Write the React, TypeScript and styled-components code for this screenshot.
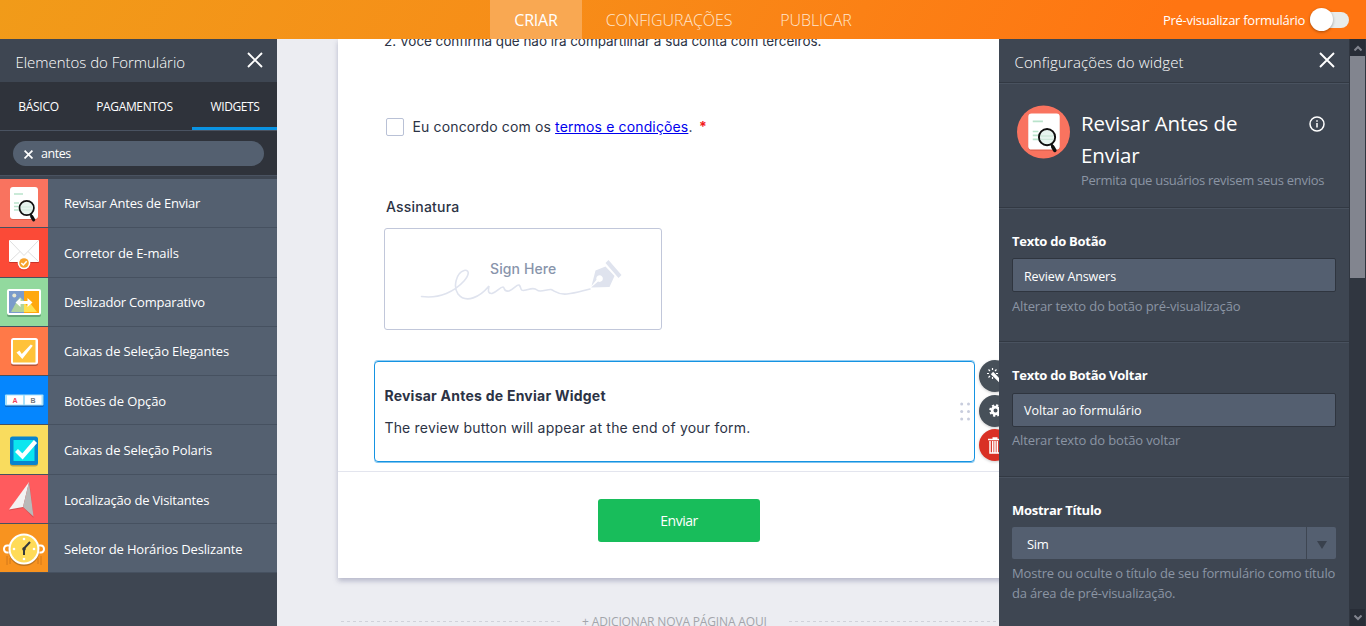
import React from "react";
import styled, { createGlobalStyle } from "styled-components";

const GlobalStyle = createGlobalStyle`
  * { box-sizing: border-box; }
  body { margin: 0; background: #ecedf2; overflow: hidden; }
  button, input { font: inherit; }
`;

const ui = `"Open Sans", "Noto Sans", sans-serif`;
const inter = `Inter, "Liberation Sans", sans-serif`;

const Page = styled.div`
  display: flex;
  flex-direction: column;
  width: 1366px;
  height: 626px;
  overflow: hidden;
  font-family: ${ui};
  font-size: 13px;
  color: #fff;
`;

const TopBar = styled.header`
  flex: none;
  display: flex;
  height: 39px;
  padding-left: 490px;
  background: linear-gradient(120deg, #f19b19 0%, #f78d18 40%, #ff7512 85%, #ff7512 100%);
`;

const TopTab = styled.a<{ $active?: boolean; $width: number; $spacing: number }>`
  display: flex;
  align-items: center;
  justify-content: center;
  width: ${(p) => p.$width}px;
  padding-top: 1px;
  font-size: 16px;
  font-weight: ${(p) => (p.$active ? 400 : 300)};
  letter-spacing: ${(p) => p.$spacing}px;
  white-space: nowrap;
  color: ${(p) => (p.$active ? "#fff" : "#ffe6cf")};
  background: ${(p) => (p.$active ? "#f9a852" : "transparent")};
`;

const Preview = styled.div`
  display: flex;
  align-items: center;
  gap: 5px;
  margin-left: auto;
  padding-right: 17px;
  font-size: 13px;
  letter-spacing: -0.27px;
`;

const Toggle = styled.span`
  display: flex;
  align-items: center;
  width: 39px;
  height: 16px;
  border-radius: 8px;
  background: #e8eceb;
`;

const Knob = styled.span`
  width: 23px;
  height: 23px;
  flex: none;
  border-radius: 50%;
  background: #fff;
  box-shadow: 0 1px 3px rgba(0, 0, 0, 0.35);
`;

const Body = styled.div`
  flex: 1;
  min-height: 0;
  display: flex;
`;

const LeftPanel = styled.aside`
  flex: none;
  width: 277px;
  background: #3e4652;
`;

const PanelTitle = styled.div`
  display: flex;
  justify-content: space-between;
  align-items: center;
  height: 43px;
  padding: 0 14px 0 15.5px;
  font-size: 15px;
  font-weight: 300;

  svg { margin-top: -1px; }
`;

const TitleText = styled.span<{ $spacing: number }>`
  padding-top: 2px;
  letter-spacing: ${(p) => p.$spacing}px;
  white-space: nowrap;
`;

const Tabs = styled.nav`
  display: flex;
  width: 278px;
  height: 48px;
  background: linear-gradient(90deg, #2f333b 277px, transparent 277px);
`;

const Tab = styled.a<{ $active?: boolean; $width: number; $spacing: number }>`
  display: flex;
  align-items: center;
  justify-content: center;
  width: ${(p) => p.$width}px;
  padding-top: 4px;
  font-size: 12px;
  letter-spacing: ${(p) => p.$spacing}px;
  border-bottom: 3px solid ${(p) => (p.$active ? "#0a93e2" : "transparent")};
`;

const SearchArea = styled.div`
  height: 49px;
  padding: 10px 13px 0;
  background: #2f333b;
  border-top: 1px solid #4a5361;
  border-bottom: 3px solid #3e4652;
  box-shadow: inset 0 -1px 0 #4a5361;
`;

const SearchField = styled.div`
  display: flex;
  align-items: center;
  gap: 8px;
  height: 25px;
  padding-left: 11px;
  border-radius: 13px;
  background: #546070;
  font-size: 12.5px;
  letter-spacing: -0.45px;

  svg { margin-top: 2px; }
`;

const WidgetList = styled.ul`
  margin: 0;
  padding: 0;
  list-style: none;
`;

const WidgetRow = styled.li`
  display: flex;
  height: 49.3px;
  background: #546070;
  border-bottom: 1px solid #465160;
`;

const IconTile = styled.span<{ $color: string }>`
  display: flex;
  align-items: center;
  justify-content: center;
  width: 48px;
  background: ${(p) => p.$color};
`;

const WidgetName = styled.span<{ $spacing: number; $nudge: number }>`
  align-self: center;
  padding: ${(p) => p.$nudge}px 0 0 16px;
  font-size: 13px;
  letter-spacing: ${(p) => p.$spacing}px;
  white-space: nowrap;
`;

const Canvas = styled.main`
  flex: none;
  width: 722px;
  overflow: hidden;
  padding-left: 61px;
  background: #ecedf2;
  font-family: ${inter};
  color: #2c3345;
`;

const FormCard = styled.section`
  width: 752px;
  height: 539px;
  background: #fff;
  box-shadow: 0 3px 5px rgba(85, 90, 130, 0.35);
`;

const FormBody = styled.div`
  height: 433px;
  padding: 0 0 0 36px;
  border-bottom: 1px solid #e3e5ee;
`;

const TermLine = styled.p`
  margin: 0 0 0 10px;
  height: 78px;
  line-height: 20px;
  font-size: 13.5px;
  letter-spacing: -0.05px;
  overflow: hidden;

  span { display: block; margin-top: -8px; }
`;

const ConsentRow = styled.label`
  display: flex;
  align-items: center;
  height: 20px;
  margin-left: 12px;
  font-size: 14px;
  letter-spacing: 0.14px;
`;

const ConsentText = styled.span`
  padding-bottom: 2px;
  white-space: pre;
`;

const CheckBox = styled.span`
  width: 18px;
  height: 18px;
  margin-right: 8.5px;
  border: 1px solid #b9c1d6;
  border-radius: 2px;
`;

const TermsLink = styled.a`
  color: #0000ee;
  text-decoration: underline;
`;

const Required = styled.b`
  margin-left: 6.5px;
  color: #f2191c;
`;

const FieldLabel = styled.h3`
  margin: 60px 0 0 12px;
  height: 51px;
  line-height: 20px;
  font-size: 14px;
  font-weight: 500;
  letter-spacing: 0.2px;
`;

const SignatureBox = styled.div`
  position: relative;
  width: 278px;
  height: 102px;
  margin: -20px 0 0 10px;
  border: 1px solid #c1c7da;
  border-radius: 3px;

  svg { display: block; }
`;

const SignHint = styled.span`
  position: absolute;
  left: 105px;
  top: 30px;
  font-size: 14px;
  font-weight: 500;
  line-height: 20px;
  letter-spacing: 0.1px;
  color: #8894ab;
  white-space: nowrap;
`;

const Selected = styled.div`
  position: relative;
  display: flex;
  align-items: center;
  justify-content: space-between;
  width: 601px;
  height: 101px;
  margin-top: 31px;
  padding: 0 4.5px 0 9.4px;
  border: 1px solid #1593e2;
  border-radius: 4px;
  box-shadow: 0 1px 0 rgba(21, 147, 226, 0.55), 0 -1px 0 rgba(21, 147, 226, 0.45);
`;

const SelectedText = styled.div`
  h3 {
    margin: 0 0 12px;
    font-size: 14px;
    line-height: 20px;
    font-weight: 700;
    letter-spacing: 0.24px;
  }
  p {
    margin: 0;
    font-size: 14px;
    line-height: 20px;
    letter-spacing: 0.2px;
  }
`;

const Actions = styled.div`
  position: absolute;
  left: 604px;
  top: -2px;
  display: flex;
  flex-direction: column;
  gap: 2.5px;
`;

const RoundButton = styled.button<{ $color: string }>`
  display: flex;
  align-items: center;
  justify-content: center;
  width: 32px;
  height: 32px;
  padding: 0;
  border: 0;
  border-radius: 50%;
  background: ${(p) => p.$color};
  box-shadow: 0 1px 3px rgba(0, 0, 0, 0.2);
`;

const Submit = styled.button`
  display: block;
  width: 162px;
  height: 43px;
  margin: 27px 0 0 260px;
  border: 0;
  border-radius: 3px;
  background: #18bd5b;
  color: #fff;
  font-family: ${ui};
  font-size: 14px;
  letter-spacing: -0.5px;
`;

const AddPage = styled.div`
  display: flex;
  align-items: center;
  gap: 22.5px;
  width: 676px;
  height: 20px;
  margin: 33px 0 0 2.6px;
  font-family: ${ui};
  font-size: 12px;
  color: #a3a5ab;
`;

const AddPageText = styled.span`
  letter-spacing: -0.15px;
  white-space: nowrap;
`;

const Dash = styled.i`
  flex: none;
  width: 219px;
  height: 1px;
  background: repeating-linear-gradient(90deg, #d0d2da 0 3px, transparent 3px 6px);
`;

const RightPanel = styled.aside`
  flex: none;
  width: 350px;
  background: #3e4652;
`;

const Section = styled.section<{ $height: number; $top?: number }>`
  height: ${(p) => p.$height}px;
  padding: ${(p) => p.$top ?? 23}px 13px 0;
  border-top: 1px solid #323943;
  box-shadow: inset 0 1px 0 #49525f;
`;

const WidgetHeader = styled.div`
  display: flex;
  padding: 0 11px 0 5px;
`;

const HeaderIcon = styled.svg`
  flex: none;
`;

const InfoIcon = styled.svg`
  flex: none;
  margin-top: 11px;
`;

const HeadText = styled.div`
  flex: 1;
  min-width: 0;
  margin-left: 11px;
`;

const Heading = styled.h2`
  width: 190px;
  margin: 2px 0 -1.5px;
  font-size: 20.5px;
  font-weight: 400;
  line-height: 32px;
  letter-spacing: -0.1px;
`;

const Hint = styled.p<{ $spacing: number }>`
  margin: 0;
  font-size: 13px;
  line-height: 20px;
  letter-spacing: ${(p) => p.$spacing}px;
  color: #8b95a4;
  white-space: nowrap;
`;

const Label = styled.label`
  display: block;
  height: 27px;
  line-height: 20px;
  font-weight: 700;
  font-size: 13px;
  letter-spacing: -0.27px;
`;

const Input = styled.div<{ $spacing: number; $drop?: number }>`
  display: flex;
  align-items: center;
  width: 324px;
  height: 34px;
  margin: ${(p) => p.$drop ?? 0}px 0 ${(p) => 4 - (p.$drop ?? 0)}px;
  padding: ${(p) => 2 - 2 * (p.$drop ?? 0)}px 0 0 11px;
  border: 1px solid #2f353f;
  border-radius: 2px;
  background: #545f70;
  font-size: 12.5px;
  letter-spacing: ${(p) => p.$spacing}px;
`;

const Select = styled.div`
  display: flex;
  width: 324px;
  height: 32px;
  margin-bottom: 4px;
  border-radius: 2px;
  background: #545f70;
`;

const SelectValue = styled.span`
  flex: 1;
  padding: 1px 0 0 15px;
  line-height: 33px;
  letter-spacing: -0.3px;
`;

const SelectArrow = styled.span`
  display: flex;
  align-items: center;
  justify-content: center;
  width: 30px;
  padding-top: 3px;
  border-left: 1px solid #3e4652;
`;

const ScrollTrack = styled.div`
  flex: none;
  display: flex;
  flex-direction: column;
  width: 17px;
  padding: 0 1px;
  background: #303640;
`;

const ScrollArrow = styled.span`
  display: flex;
  align-items: center;
  justify-content: center;
  height: 17px;
  background: #282d37;
`;

const ScrollThumb = styled.span`
  height: 222px;
  margin-bottom: auto;
  background: #82858f;
`;

const Close = ({ size = 16, weight = 1.9 }: { size?: number; weight?: number }) => (
  <svg width={size} height={size} viewBox="0 0 16 16" stroke="#fff" strokeWidth={weight}>
    <path d="M1 1l14 14M15 1L1 15" />
  </svg>
);

const ReviewIcon = ({ size = 48 }: { size?: number }) => (
  <svg width={size} height={size} viewBox="0 0 48 48" fill="none">
    <rect x="10" y="9" width="28" height="32" rx="3" fill="#c9503f" opacity=".6" />
    <rect x="10" y="8" width="28" height="32" rx="3" fill="#fff" />
    <path d="M14 15h9M14 24h5M14 27.5h5M14 31h6" stroke="#b9e3cb" strokeWidth="1.5" />
    <circle cx="26.7" cy="29" r="7.2" fill="#e7f4ef" stroke="#111" strokeWidth="1.7" />
    <path d="M21 28h11M21 31h11" stroke="#cfe9dc" strokeWidth="1.2" />
    <path d="M30.5 35l1.2 2.3" stroke="#111" strokeWidth="2" />
    <path d="M31.8 37.6l1.8 3.2" stroke="#111" strokeWidth="3.2" strokeLinecap="round" />
  </svg>
);

const MailIcon = () => (
  <svg width="48" height="48" viewBox="0 0 48 48" fill="none">
    <rect x="9" y="13" width="30" height="22" rx="1" fill="#c93329" />
    <rect x="9" y="12" width="30" height="22" rx="1" fill="#fff" />
    <path d="M9.5 33.5L20 23.5M38.5 33.5L28 23.5M9.5 12.5L24 27.5L38.5 12.5" stroke="#dedede" strokeWidth="1" />
    <circle cx="24" cy="36" r="6.4" fill="#c93329" opacity=".5" />
    <circle cx="24" cy="35" r="6.3" fill="#fff" />
    <circle cx="24" cy="35" r="4.8" fill="#f7a32c" />
    <path d="M21.3 35l2 2 3.4-3.8" stroke="#fff" strokeWidth="1.5" />
  </svg>
);

const CompareIcon = () => (
  <svg width="48" height="48" viewBox="0 0 48 48" fill="none">
    <rect x="7" y="13" width="34" height="26" rx="2" fill="#66a678" />
    <rect x="7" y="11" width="34" height="26" rx="2" fill="#fff" />
    <path d="M9 13h15v22H9z" fill="#7b9bcb" />
    <path d="M24 13h15v22H24z" fill="#ffa80f" />
    <circle cx="14.3" cy="17.5" r="2" fill="#e8e8d0" />
    <path d="M11 34l6-11 3-4 4 4v11z" fill="#aed3a0" />
    <path d="M24 34V24l3 4 3-3 7 9z" fill="#ffe14f" />
    <path d="M15.5 24.5l5-4.5v3h7v-3l5 4.5-5 4.500v-3h-7v3z" fill="#fff" />
  </svg>
);

const ElegantIcon = () => (
  <svg width="48" height="48" viewBox="0 0 48 48" fill="none">
    <rect x="11" y="12" width="27" height="27" rx="2.5" fill="#b85334" />
    <rect x="11" y="11" width="27" height="26.5" rx="2.5" fill="#fff" />
    <rect x="13" y="13" width="22.5" height="22.5" fill="#ffc23a" />
    <path d="M16.5 25.5l3-2 2.3 3.5 9-9.5 2 1.2-10.5 13.3z" fill="#fff" />
  </svg>
);

const Letter = styled.text`
  font-family: "Liberation Sans", sans-serif;
  font-size: 7px;
  font-weight: 700;
`;

const OptionIcon = () => (
  <svg width="48" height="48" viewBox="0 0 48 48" fill="none">
    <rect x="5" y="20" width="38.5" height="11" rx="1" fill="#0b62bd" />
    <rect x="5" y="18.5" width="38.5" height="11" rx="1" fill="#a8e2fb" />
    <path d="M7 19.5h16v9H7zM25 19.5h16.5v9H25z" fill="#fff" />
    <Letter x="12.5" y="26.6" fill="#f2415a">A</Letter>
    <Letter x="30.5" y="26.6" fill="#737780">B</Letter>
  </svg>
);

const PolarisIcon = () => (
  <svg width="48" height="48" viewBox="0 0 48 48" fill="none">
    <rect x="10" y="12.5" width="28" height="28" rx="3" fill="#bba34a" />
    <rect x="10" y="10.5" width="28" height="28.5" rx="2.5" fill="#0784cf" />
    <rect x="13.5" y="14" width="21" height="21" fill="#0be6ef" />
    <path d="M16.5 24.5l6 6L35.5 15.5" stroke="#fff" strokeWidth="4.2" />
  </svg>
);

const VisitorIcon = () => (
  <svg width="48" height="48" viewBox="0 0 48 48" fill="none">
    <path d="M29.5 8L9 35.5l14.5-2.5L33.5 43z" fill="#b44548" opacity=".5" />
    <path d="M29 7L9 34.5l14-2.5z" fill="#f3f3f3" />
    <path d="M29 7l-6 25 10.5 9.5z" fill="#b9b9b9" />
  </svg>
);

const ClockIcon = () => (
  <svg width="48" height="48" viewBox="0 0 48 48" fill="none">
    <path d="M7 32v9M10 34v6M38 34v6M41 32v9" stroke="#c9721b" strokeWidth=".8" />
    <path d="M10 21.5H7a3 3.500 0 000 7h3M38 21.5h3a3 3.500 0 010 7h-3" stroke="#fff" strokeWidth="2" />
    <circle cx="24" cy="26.5" r="15.5" fill="#bf741e" />
    <circle cx="24" cy="25" r="15.5" fill="#fff" />
    <circle cx="24" cy="25" r="13.4" fill="#ffdb59" />
    <circle cx="24" cy="15" r="1.3" fill="#fff" />
    <circle cx="24" cy="35" r="1.3" fill="#fff" />
    <circle cx="14" cy="25" r="1.3" fill="#fff" />
    <circle cx="34" cy="25" r="1.3" fill="#fff" />
    <path d="M24 31v-6.5l6-6.5" stroke="#33393d" strokeWidth="2" />
    <circle cx="24" cy="25" r="1.8" fill="#33393d" />
  </svg>
);

const widgets = [
  { name: "Revisar Antes de Enviar", color: "#f9735f", spacing: -0.21, nudge: 0, icon: <ReviewIcon /> },
  { name: "Corretor de E-mails", color: "#fb4a37", spacing: -0.12, nudge: 1, icon: <MailIcon /> },
  { name: "Deslizador Comparativo", color: "#92d99e", spacing: -0.2, nudge: 0, icon: <CompareIcon /> },
  { name: "Caixas de Seleção Elegantes", color: "#ff7948", spacing: -0.14, nudge: 0, icon: <ElegantIcon /> },
  { name: "Botões de Opção", color: "#0586fe", spacing: -0.1, nudge: 1.4, icon: <OptionIcon /> },
  { name: "Caixas de Seleção Polaris", color: "#f9dc5e", spacing: -0.14, nudge: 0, icon: <PolarisIcon /> },
  { name: "Localização de Visitantes", color: "#ff5b5e", spacing: -0.18, nudge: 1.4, icon: <VisitorIcon /> },
  { name: "Seletor de Horários Deslizante", color: "#f8931f", spacing: -0.17, nudge: 1.4, icon: <ClockIcon /> },
];

export default function App() {
  return (
    <Page>
      <GlobalStyle />
      <TopBar>
        <TopTab $active $width={92} $spacing={-0.2}>CRIAR</TopTab>
        <TopTab $width={174} $spacing={-0.08}>CONFIGURAÇÕES</TopTab>
        <TopTab $width={120} $spacing={-0.08}>PUBLICAR</TopTab>
        <Preview>
          Pré-visualizar formulário
          <Toggle><Knob /></Toggle>
        </Preview>
      </TopBar>
      <Body>
        <LeftPanel>
          <PanelTitle><TitleText $spacing={-0.03}>Elementos do Formulário</TitleText><Close /></PanelTitle>
          <Tabs>
            <Tab $width={77} $spacing={-0.3}>BÁSICO</Tab>
            <Tab $width={115} $spacing={-0.36}>PAGAMENTOS</Tab>
            <Tab $width={86} $spacing={-0.38} $active>WIDGETS</Tab>
          </Tabs>
          <SearchArea>
            <SearchField><Close size={9} weight={3} />antes</SearchField>
          </SearchArea>
          <WidgetList>
            {widgets.map((w) => (
              <WidgetRow key={w.name}>
                <IconTile $color={w.color}>{w.icon}</IconTile>
                <WidgetName $spacing={w.spacing} $nudge={w.nudge}>{w.name}</WidgetName>
              </WidgetRow>
            ))}
          </WidgetList>
        </LeftPanel>

        <Canvas>
          <FormCard>
            <FormBody>
              <TermLine><span>2. Você confirma que não irá compartilhar a sua conta com terceiros.</span></TermLine>
              <ConsentRow>
                <CheckBox />
                <ConsentText>
                  Eu concordo com os <TermsLink>termos e condições</TermsLink>.<Required>*</Required>
                </ConsentText>
              </ConsentRow>
              <FieldLabel>Assinatura</FieldLabel>
              <SignatureBox>
                <svg width="276" height="100" viewBox="385 229 276 100" fill="none">
                  <path d="M421.5 296.5C440 299 455 291 464 281C471 273 468 269 464 270.5C456 273 453 287 458 294C466 304 480 297 489 286C488 291 488 294 492 293.5C497 292 500 287 503 287C505 287 503 292 509 291C514 289 517 284 519 285C522 287 519 292 526 290C530 289 534 287 537 290C540 293 547 289 551 289.5C555 291 558 295 567 294C576 293 583 290.5 590 289" stroke="#dfe3ee" strokeWidth="1.6" strokeLinecap="round" />
                  <path d="M591.5 286l4-15.5 10-4 9 9.5-5 11-18.5.5 7-6a3.3 3.3 0 10-1.5-1.7z" fill="#dfe3ee" />
                  <path d="M605.5 263l3-3 13 15-3 3z" fill="#dfe3ee" />
                </svg>
                <SignHint>Sign Here</SignHint>
              </SignatureBox>
              <Selected>
                <SelectedText>
                  <h3>Revisar Antes de Enviar Widget</h3>
                  <p>The review button will appear at the end of your form.</p>
                </SelectedText>
                <svg width="10" height="19" viewBox="0 0 10 19" fill="#c8cddd">
                  {[2, 9.5, 17].map((y) => (
                    <React.Fragment key={y}>
                      <circle cx="1.7" cy={y} r="1.5" />
                      <circle cx="8.5" cy={y} r="1.5" />
                    </React.Fragment>
                  ))}
                </svg>
                <Actions>
                  <RoundButton $color="#475059" aria-label="Designer">
                    <svg width="16" height="16" viewBox="0 0 16 16" stroke="#fff" fill="none">
                      <path d="M5 5l10 10" strokeWidth="3.2" />
                      <path d="M5.5 0v2M1.5 1.5l1.5 1.5M0 5.5h2M1.5 9.5L3 8M9.5 1.5L8 3M5.5 9v2M9 5.5h2" strokeWidth="1.2" />
                    </svg>
                  </RoundButton>
                  <RoundButton $color="#475059" aria-label="Settings">
                    <svg width="13" height="13" viewBox="0 0 13 13" fill="none" stroke="#fff">
                      <circle cx="6.5" cy="6.5" r="3.4" strokeWidth="2.8" />
                      <circle cx="6.5" cy="6.5" r="5.3" strokeWidth="2" strokeDasharray="2.2 1.96" />
                    </svg>
                  </RoundButton>
                  <RoundButton $color="#d93025" aria-label="Delete">
                    <svg width="14" height="17" viewBox="0 0 14 17" fill="none" stroke="#fff">
                      <path d="M0 2.5h14M4.5 1h5" strokeWidth="1.6" />
                      <path d="M2 4v12h10V4M4.7 4v12M7 4v12M9.3 4v12" strokeWidth="1.5" />
                    </svg>
                  </RoundButton>
                </Actions>
              </Selected>
            </FormBody>
            <Submit>Enviar</Submit>
          </FormCard>
          <AddPage><Dash /><AddPageText>+ ADICIONAR NOVA PÁGINA AQUI</AddPageText><Dash /></AddPage>
        </Canvas>

        <RightPanel>
          <PanelTitle><TitleText $spacing={0.13}>Configurações do widget</TitleText><Close /></PanelTitle>
          <Section $height={125} $top={22}>
            <WidgetHeader>
              <HeaderIcon width="53" height="54" viewBox="0 0 53 54">
                <circle cx="26.5" cy="27" r="26.5" fill="#f9735f" />
                <g transform="translate(0 -.5)"><ReviewIcon size={54} /></g>
              </HeaderIcon>
              <HeadText>
                <Heading>Revisar Antes de Enviar</Heading>
                <Hint $spacing={-0.28}>Permita que usuários revisem seus envios</Hint>
              </HeadText>
              <InfoIcon width="16" height="16" viewBox="0 0 16 16" fill="none" stroke="#fff">
                <circle cx="8" cy="8" r="7" strokeWidth="1.5" />
                <path d="M8 7v4.5M8 4.3v1.5" strokeWidth="1.5" />
              </InfoIcon>
            </WidgetHeader>
          </Section>
          <Section $height={134}>
            <Label>Texto do Botão</Label>
            <Input $spacing={-0.1}>Review Answers</Input>
            <Hint $spacing={-0.15}>Alterar texto do botão pré-visualização</Hint>
          </Section>
          <Section $height={135}>
            <Label>Texto do Botão Voltar</Label>
            <Input $spacing={0} $drop={1}>Voltar ao formulário</Input>
            <Hint $spacing={-0.13}>Alterar texto do botão voltar</Hint>
          </Section>
          <Section $height={150}>
            <Label>Mostrar Título</Label>
            <Select>
              <SelectValue>Sim</SelectValue>
              <SelectArrow><svg width="10" height="8" viewBox="0 0 10 8" fill="#39414d"><path d="M0 0h10L5 8z" /></svg></SelectArrow>
            </Select>
            <Hint $spacing={-0.17}>Mostre ou oculte o título de seu formulário como título<br />da área de pré-visualização.</Hint>
          </Section>
        </RightPanel>
        <ScrollTrack>
          <ScrollArrow><svg width="8" height="6" viewBox="0 0 8 6" fill="none" stroke="#82858f" strokeWidth="2"><path d="M.5 5.5L4 2l3.5 3.5" /></svg></ScrollArrow>
          <ScrollThumb />
          <ScrollArrow><svg width="8" height="6" viewBox="0 0 8 6" fill="none" stroke="#82858f" strokeWidth="2"><path d="M.5 .5L4 4 7.5 .5" /></svg></ScrollArrow>
        </ScrollTrack>
      </Body>
    </Page>
  );
}
